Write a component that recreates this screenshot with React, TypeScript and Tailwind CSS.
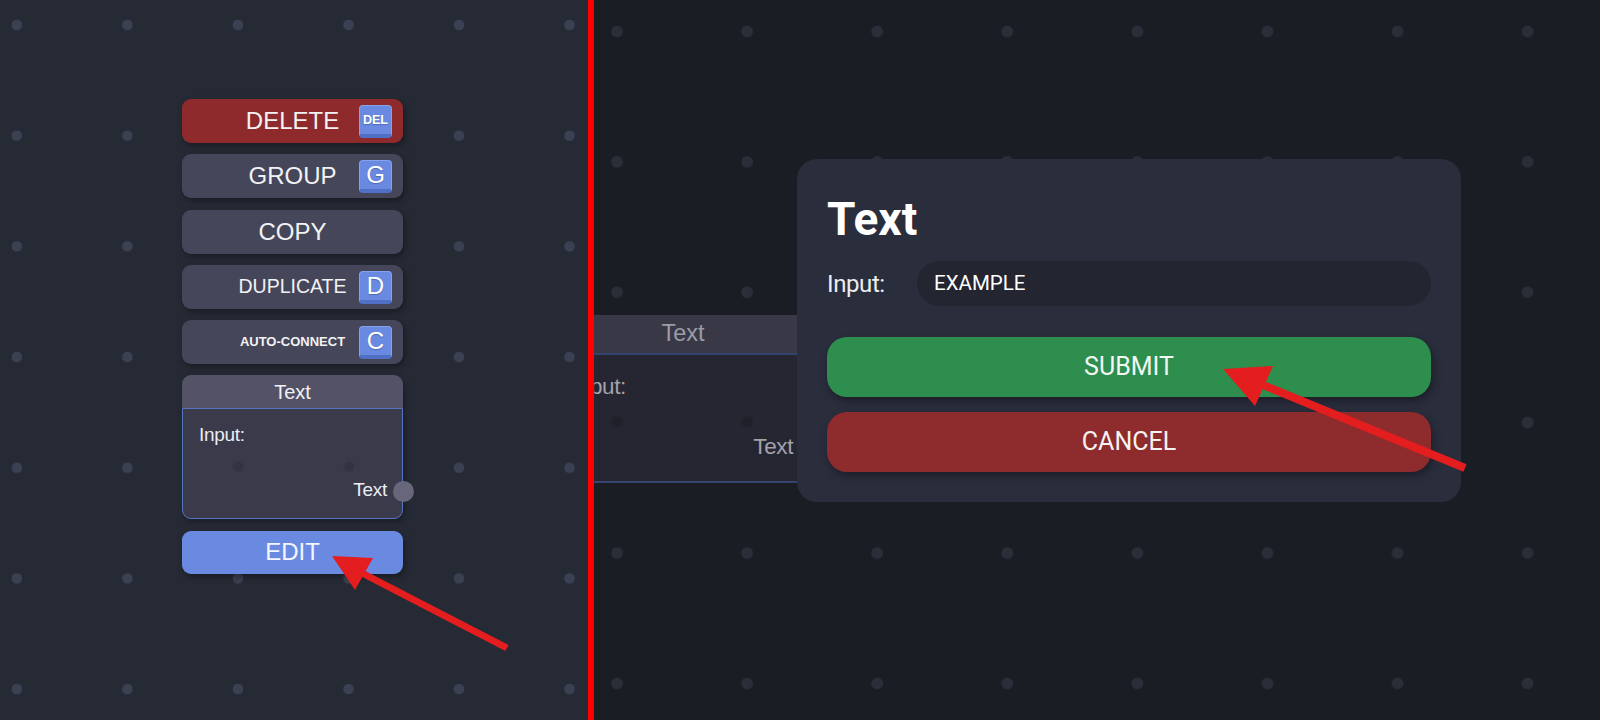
import React from "react";

function Key({ children, small }: { children: React.ReactNode; small?: boolean }) {
  return (
    <span
      className={
        "absolute right-[11px] top-[6px] flex h-[33px] w-[33px] items-center justify-center rounded-[4px] border border-[#86a1ee] border-b-4 border-b-[#5070c6] bg-[#6a8ae2] text-white [text-shadow:0_1px_1px_rgba(0,0,0,0.25)] " +
        (small ? "text-[12.5px] font-bold" : "text-[24px] leading-none")
      }
    >
      {children}
    </span>
  );
}

function MenuButton({
  label,
  keyLabel,
  smallKey,
  bg,
  textClass,
}: {
  label: string;
  keyLabel?: string;
  smallKey?: boolean;
  bg: string;
  textClass: string;
}) {
  return (
    <div
      className={
        "relative flex h-[44px] w-full items-center justify-center rounded-[9px] text-[#f2f2f4] shadow-[2px_3px_6px_rgba(0,0,0,0.35)] " +
        bg
      }
    >
      <span className={textClass}>{label}</span>
      {keyLabel && <Key small={smallKey}>{keyLabel}</Key>}
    </div>
  );
}

export default function App() {
  return (
    <div className="relative flex h-[720px] w-[1600px] overflow-hidden bg-[#1b1d24] font-['Liberation_Sans',Arial,sans-serif]">
      {/* Left panel */}
      <div className="h-full w-[588px] shrink-0 bg-[#262a35] [background-image:radial-gradient(circle_at_16.8px_25px,#3b4052_5px,transparent_5.6px)] [background-size:110.55px_110.7px] pl-[182px] pt-[99px]">
        <div className="flex w-[221px] flex-col gap-[11.3px]">
          <MenuButton label="DELETE" keyLabel="DEL" smallKey bg="bg-[#8e2a2b]" textClass="text-[24px]" />
          <MenuButton label="GROUP" keyLabel="G" bg="bg-[#45465a]" textClass="text-[24px]" />
          <MenuButton label="COPY" bg="bg-[#45465a]" textClass="text-[24px]" />
          <MenuButton label="DUPLICATE" keyLabel="D" bg="bg-[#45465a]" textClass="text-[19.5px]" />
          <MenuButton label="AUTO-CONNECT" keyLabel="C" bg="bg-[#45465a]" textClass="text-[13px] font-bold" />

          {/* Text node */}
          <div className="relative flex flex-col rounded-[9px] shadow-[2px_3px_6px_rgba(0,0,0,0.3)]">
            <div className="flex h-[33px] items-center justify-center rounded-t-[9px] bg-[#545266] text-[20px] text-[#f2f2f4]">
              Text
            </div>
            <div className="relative h-[111px] rounded-b-[9px] border border-[#5574c0] bg-[#3a3a4b] [background-image:radial-gradient(circle_at_55.3px_57.8px,#333343_5px,transparent_5.6px)] [background-size:110.55px_110.7px]">
              <div className="pl-[16px] pt-[14px] text-[19px] leading-[24px] tracking-[-0.3px] text-[#ececf2]">Input:</div>
              <div className="absolute bottom-[16px] right-[15px] text-[19px] leading-[24px] tracking-[-0.3px] text-[#ececf2]">Text</div>
              <div className="absolute bottom-[16px] right-[-12px] h-[21px] w-[21px] rounded-full bg-[#68667b]" />
            </div>
          </div>

          <div className="flex h-[43px] w-full items-center justify-center rounded-[9px] bg-[#6a8ae2] text-[24px] text-[#f4f6ff] shadow-[2px_3px_6px_rgba(0,0,0,0.35)]">
            EDIT
          </div>
        </div>
      </div>

      {/* Separator */}
      <div className="h-full w-[6px] shrink-0 bg-[#ff0000]" />

      {/* Right panel */}
      <div className="relative h-full flex-1 overflow-hidden bg-[#1b1d24] [background-image:radial-gradient(circle_at_23px_31.5px,#2b2e39_5.5px,transparent_6.1px)] [background-size:130.1px_130.4px]">
        {/* dimmed node behind modal */}
        <div className="absolute left-[-42px] top-[315px] w-[262px]">
          <div className="flex h-[38px] items-center justify-center bg-[#383846] text-[23.5px] text-[#9c9ca7]">
            Text
          </div>
          <div className="relative h-[130px] border-y-2 border-[#34446f] bg-[#262632] [background-image:radial-gradient(circle_at_65px_67px,#20202a_5.5px,transparent_6.1px)] [background-size:130.1px_130.4px]">
            <div className="pl-[20px] pt-[18px] text-[22.5px] leading-[28px] tracking-[-0.4px] text-[#a2a2ab]">Input:</div>
            <div className="absolute bottom-[20px] right-[21px] text-[22.5px] leading-[28px] tracking-[-0.4px] text-[#a2a2ab]">Text</div>
          </div>
        </div>

        {/* Modal */}
        <div className="absolute left-[203px] top-[159px] flex w-[664px] flex-col rounded-[20px] bg-[#2a2d3c] px-[30px] pb-[30px] pt-[37px] font-['Roboto',sans-serif]">
          <div className="text-[46px] font-bold leading-none text-white">Text</div>
          <div className="mt-[19px] flex items-center">
            <div className="w-[90px] shrink-0 text-[24px] tracking-[-0.4px] text-[#ececf2]">Input:</div>
            <div className="flex h-[45px] flex-1 items-center rounded-full bg-[#232530] pl-[17px] text-[20.5px] text-white">
              EXAMPLE
            </div>
          </div>
          <div className="mt-[31px] flex h-[60px] items-center justify-center rounded-[20px] bg-[#2d8e4e] text-[25px] text-[#f2f7f3] shadow-[2px_4px_8px_rgba(0,0,0,0.35)]">
            SUBMIT
          </div>
          <div className="mt-[15px] flex h-[60px] items-center justify-center rounded-[20px] bg-[#8e2b2d] text-[25px] text-[#f7f2f2] shadow-[2px_4px_8px_rgba(0,0,0,0.35)]">
            CANCEL
          </div>
        </div>
      </div>

      {/* Annotation arrows */}
      <svg className="pointer-events-none absolute inset-0" width="1600" height="720" viewBox="0 0 1600 720">
        <line x1="358" y1="571" x2="507" y2="648" stroke="#e41e1e" strokeWidth="7" />
        <polygon points="332,556 373,558 355,590" fill="#e41e1e" />
        <line x1="1258" y1="383" x2="1465" y2="468" stroke="#e41e1e" strokeWidth="8" />
        <polygon points="1223,369 1273,366 1255,406" fill="#e41e1e" />
      </svg>
    </div>
  );
}
